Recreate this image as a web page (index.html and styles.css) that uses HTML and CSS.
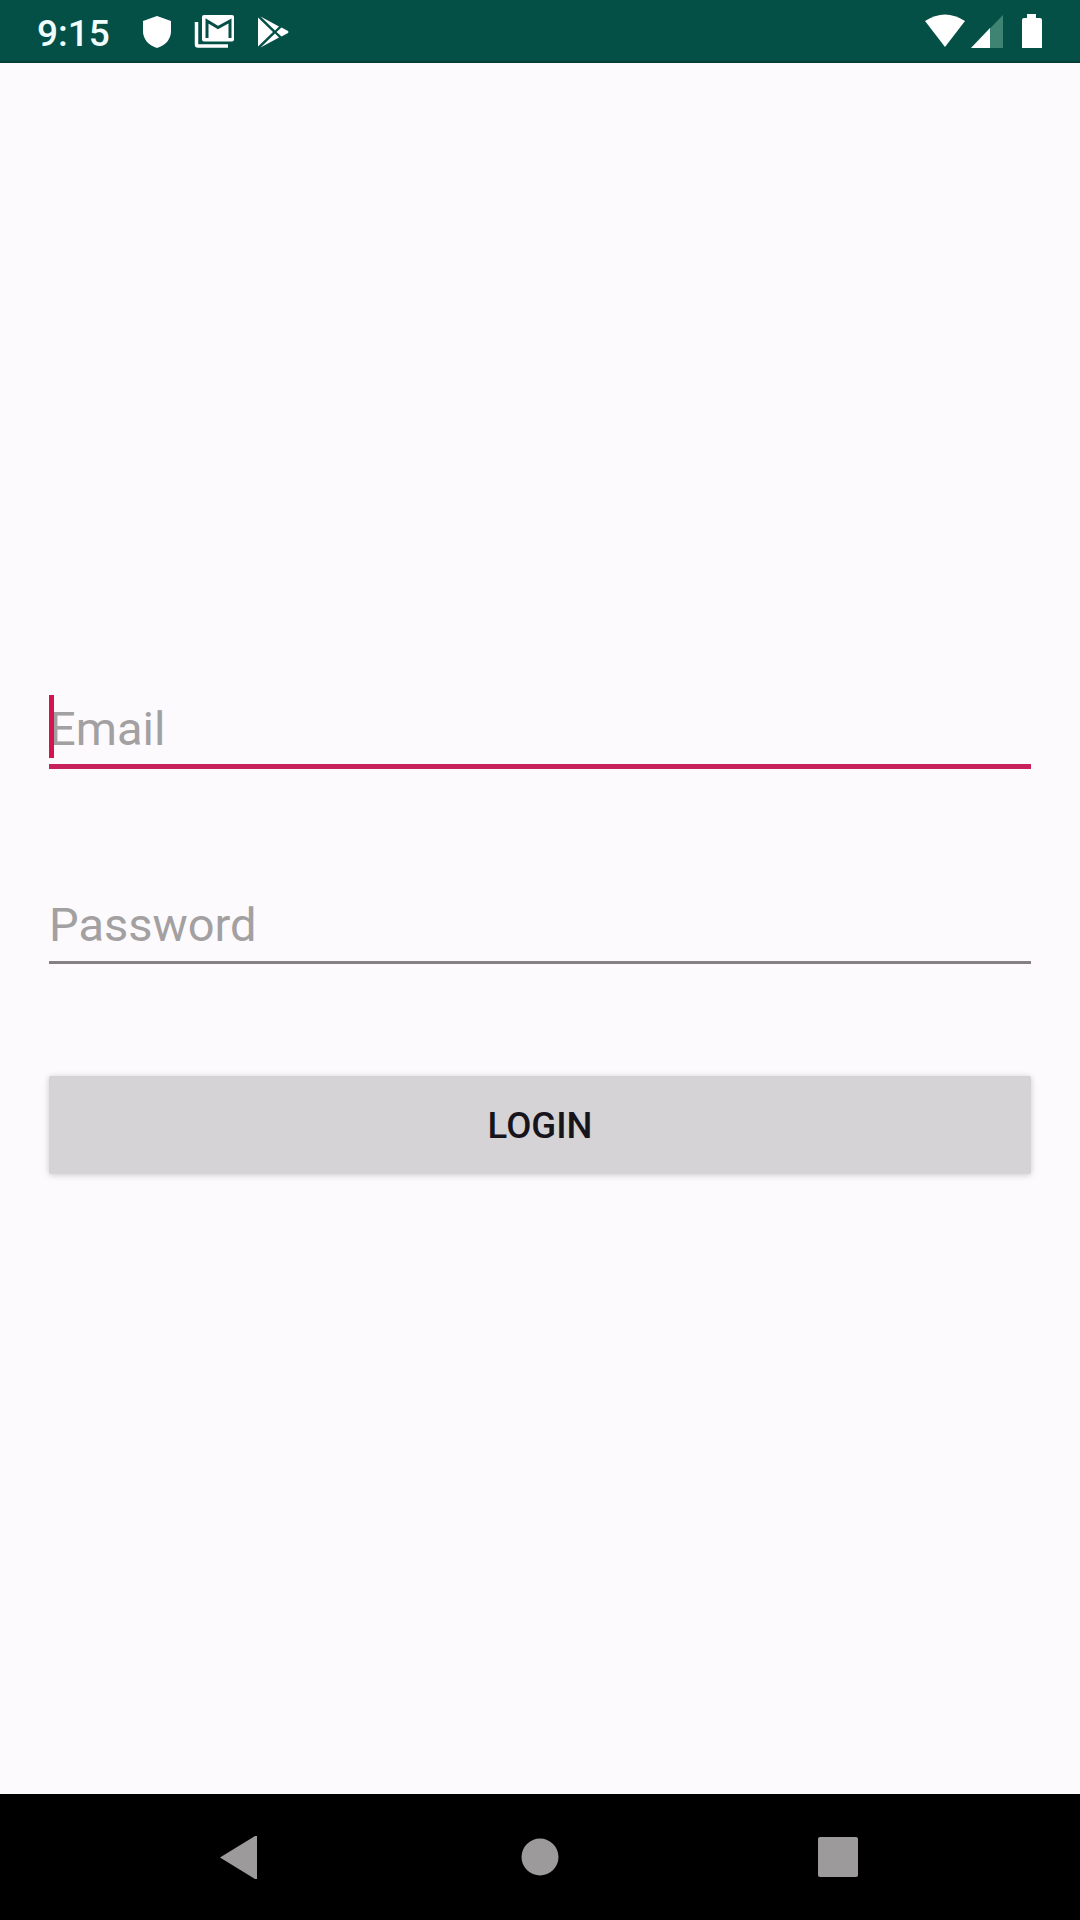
FILE: index.html
```html
<!DOCTYPE html>
<html lang="en">
<head>
<meta charset="utf-8">
<title>Login</title>
<link rel="stylesheet" href="styles.css">
</head>
<body>
<div class="screen">
  <header class="status-bar">
    <span class="time">9:15</span>
    <svg class="shield" width="28" height="32" viewBox="0 0 28 32" fill="#fff"><path d="M14 0 28 5V15C28 23 23 29 14 32 5 29 0 23 0 15V5Z"/></svg>
    <svg class="mail" width="40" height="34" viewBox="0 0 40 34"><path d="M2.500 7V29.500Q2.500 31 4 31H34" fill="none" stroke="#fff" stroke-width="3.500"/><rect x="8" y="0" width="32" height="26.500" rx="2" fill="#fff"/><path d="M13 23V6L24 12.500 36 6V23" fill="none" stroke="#064f49" stroke-width="3"/></svg>
    <svg class="play" width="31" height="32" viewBox="0 0 31 32" fill="#fff"><path d="M0 1.500V30.500L15 16ZM2.500 .5 17 14.500 21 10.500ZM2.500 31.500 17 17.500 21 21.500ZM18.500 16 23.500 11.500 30 15Q31 16 30 17L23.500 20.500Z"/></svg>
    <span class="spacer"></span>
    <svg class="wifi" width="40" height="33" viewBox="0 0 40 33" fill="#fff"><path d="M0 7Q20 -6 40 7L20 33Z"/></svg>
    <svg class="signal" width="32" height="33" viewBox="0 0 32 33"><path d="M0 33 32 0V33Z" fill="#3f8373"/><path d="M0 33 19 13V33Z" fill="#fff"/></svg>
    <svg class="battery" width="20" height="34" viewBox="0 0 20 34" fill="#fff"><path d="M5 0H14V4H18Q20 4 20 6V34H0V6Q0 4 2 4H5Z"/></svg>
  </header>
  <main class="form">
    <div class="field email"><span class="hint">Email</span><i class="caret"></i></div>
    <div class="field password"><span class="hint">Password</span></div>
    <button class="login" type="button">LOGIN</button>
  </main>
  <footer class="nav-bar">
    <svg class="back" width="37" height="43" viewBox="0 0 37 43"><path d="M0 21.500 35 0H37V43H35Z"/></svg>
    <svg class="home" width="38" height="38" viewBox="0 0 38 38"><circle cx="19" cy="19" r="18.500"/></svg>
    <svg class="recent" width="40" height="40" viewBox="0 0 40 40"><rect width="40" height="40" rx="2"/></svg>
  </footer>
</div>
</body>
</html>
```
FILE: styles.css
```css
* { box-sizing: border-box; }
body { margin: 0; font-family: Roboto, sans-serif; }
.screen { width: 1080px; height: 1920px; display: flex; flex-direction: column; background: #fcfafc; }

.status-bar { height: 63px; flex: none; display: flex; align-items: flex-start; padding: 0 38px 0 37px; background: #045047; border-bottom: 2px solid #033f37; }
.time { width: 106px; padding-top: 11px; font-size: 37px; line-height: 46px; font-weight: 500; color: #f2ffff; }
.shield { margin-top: 16px; }
.mail { margin: 15px 0 0 23px; }
.play { margin: 16px 0 0 24px; }
.spacer { flex: 1; }
.wifi { margin-top: 14px; }
.signal { margin: 15px 0 0 6px; }
.battery { margin: 14px 0 0 19px; }

.form { flex: 1; display: flex; flex-direction: column; padding: 632px 49px 0; }
.field { position: relative; display: flex; align-items: flex-start; font-size: 47px; line-height: 54px; color: #a3a0a2; }
.email { height: 74px; padding-top: 7px; border-bottom: 5px solid #c7205b; }
.caret { position: absolute; left: 0; top: 0; width: 5px; height: 63px; background: #d3154f; }
.password { height: 79px; margin-top: 116px; padding-top: 13px; border-bottom: 3px solid #858083; }
.login { height: 98px; margin-top: 112px; padding: 0; border: 0; border-radius: 2px; background: #d5d3d6; box-shadow: 0 1px 6px rgba(0, 0, 0, .2); font: 500 36.500px/100px Roboto, sans-serif; color: #17151b; }

.nav-bar { height: 126px; flex: none; display: flex; align-items: flex-start; padding-left: 220px; background: #000; fill: #9d9a9b; }
.back { margin-top: 42px; }
.home { margin: 44px 0 0 264px; }
.recent { margin: 43px 0 0 259px; }
```
